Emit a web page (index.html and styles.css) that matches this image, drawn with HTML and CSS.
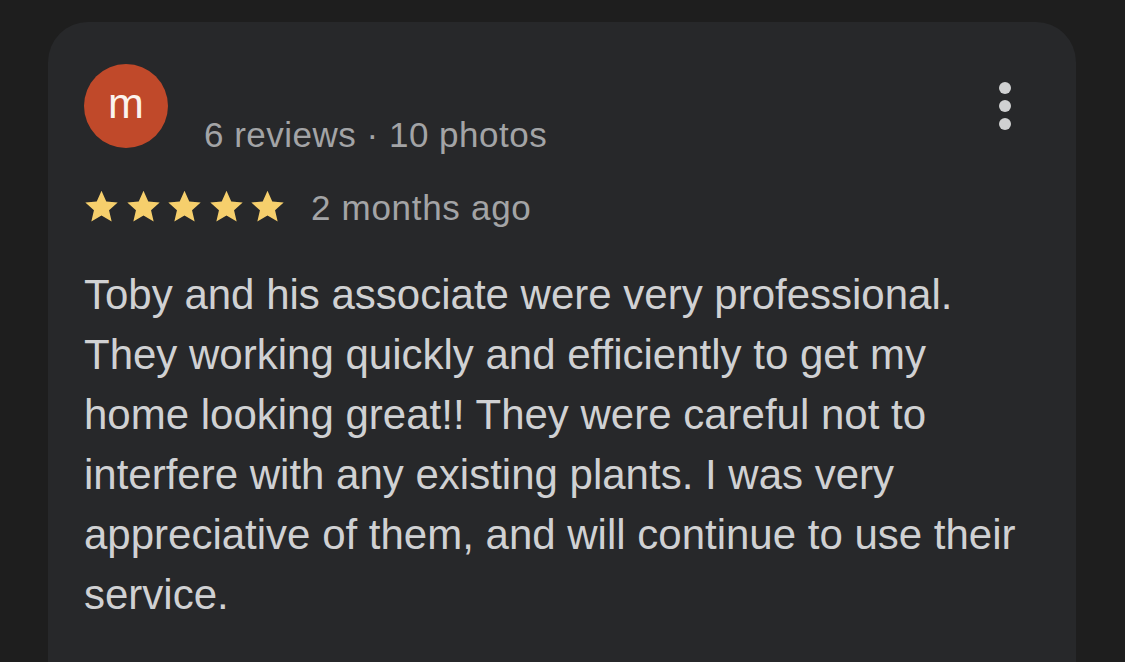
FILE: index.html
```html
<!DOCTYPE html>
<html>
<head>
<meta charset="utf-8">
<link rel="stylesheet" href="styles.css">
</head>
<body>
<div class="card">
  <div class="head">
    <div class="avatar">m</div>
    <div class="meta">6 reviews · 10 photos</div>
    <div class="more"><span></span><span></span><span></span></div>
  </div>
  <div class="rating">
    <div class="stars">
      <svg viewBox="0 0 24 24"><path d="M12 1.8l3.1 6.9 7.4.7-5.6 5 1.7 7.4L12 17.9l-6.6 3.9 1.7-7.4-5.6-5 7.4-.7z"/></svg>
      <svg viewBox="0 0 24 24"><path d="M12 1.8l3.1 6.9 7.4.7-5.6 5 1.7 7.4L12 17.9l-6.6 3.9 1.7-7.4-5.6-5 7.4-.7z"/></svg>
      <svg viewBox="0 0 24 24"><path d="M12 1.8l3.1 6.9 7.4.7-5.6 5 1.7 7.4L12 17.9l-6.6 3.9 1.7-7.4-5.6-5 7.4-.7z"/></svg>
      <svg viewBox="0 0 24 24"><path d="M12 1.8l3.1 6.9 7.4.7-5.6 5 1.7 7.4L12 17.9l-6.6 3.9 1.7-7.4-5.6-5 7.4-.7z"/></svg>
      <svg viewBox="0 0 24 24"><path d="M12 1.8l3.1 6.9 7.4.7-5.6 5 1.7 7.4L12 17.9l-6.6 3.9 1.7-7.4-5.6-5 7.4-.7z"/></svg>
    </div>
    <span class="when">2 months ago</span>
  </div>
  <p class="text">Toby and his associate were very professional.<br>They working quickly and efficiently to get my<br>home looking great!! They were careful not to<br>interfere with any existing plants. I was very<br>appreciative of them, and will continue to use their<br>service.</p>
</div>
</body>
</html>
```
FILE: styles.css
```css
html, body {
  margin: 0;
  padding: 0;
  background: #1e1e1e;
  height: 662px;
  overflow: hidden;
  font-family: "Liberation Sans", Arial, sans-serif;
}
.card {
  margin: 22px 0 0 48px;
  width: 1028px;
  height: 640px;
  box-sizing: border-box;
  background: #27282a;
  border-radius: 40px 40px 0 0;
  padding: 42px 0 0 36px;
}
.head {
  display: flex;
  align-items: flex-start;
  height: 110px;
}
.avatar {
  width: 84px;
  height: 84px;
  border-radius: 50%;
  background: #c0492a;
  color: #fbf3ee;
  font-size: 43px;
  line-height: 78px;
  text-align: center;
}
.meta {
  margin: 51px 0 0 36px;
  font-size: 35px;
  letter-spacing: 0.5px;
  color: #a3a4a6;
  line-height: 40px;
  flex: 1;
}
.more {
  display: flex;
  flex-direction: column;
  gap: 6px;
  margin: 18px 65px 0 0;
}
.more span {
  width: 12px;
  height: 12px;
  border-radius: 50%;
  background: #d0d1d2;
}
.rating {
  display: flex;
  align-items: flex-start;
  padding-top: 14px;
  margin-left: -1px;
}
.stars {
  display: flex;
  gap: 4.5px;
}
.stars svg {
  width: 37px;
  height: 37px;
  fill: #f6cf6c;
}
.when {
  margin-left: 25px;
  font-size: 35px;
  letter-spacing: 0.7px;
  line-height: 40px;
  color: #a3a4a6;
}
.text {
  margin: 37px 0 0 0;
  font-size: 42px;
  line-height: 60px;
  color: #d0d1d3;
}
```
